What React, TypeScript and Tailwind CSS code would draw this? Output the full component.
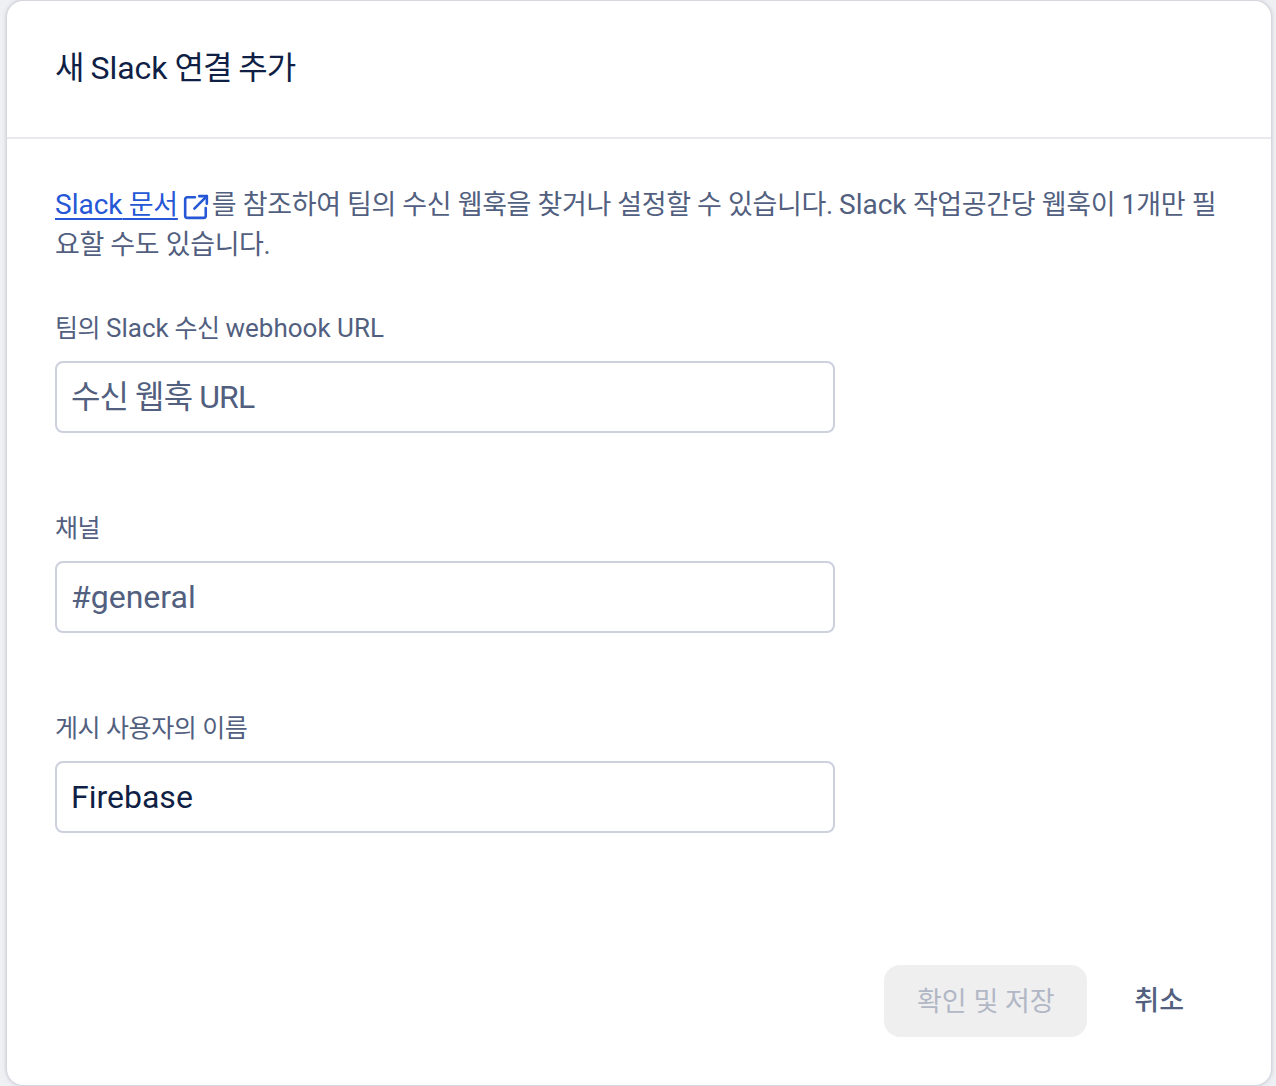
import React from 'react';

// Latin runs are a touch wider than the Korean ones in the reference
const Latin = ({ size, children }: { size: string; children: React.ReactNode }) => (
    <span className={`${size} tracking-normal`}>{children}</span>
);

const Field = ({ label, placeholder, value, inputClass }: { label: React.ReactNode; placeholder?: string; value?: string; inputClass?: string }) => (
    <div className="flex flex-col">
        <label className="text-[25px] leading-[34px] tracking-[-0.4px] text-[#525f7f]">{label}</label>
        <input
            readOnly
            placeholder={placeholder}
            value={value ?? ''}
            className={`mt-[15px] w-[780px] h-[72px] px-[14px] rounded-[8px] border-2 border-[#cdd1de] bg-white text-[32px] text-[#0f1f45] placeholder:text-[#525f7f] outline-none ${inputClass ?? ''}`}
        />
    </div>
);

export default function App() {
    return (
        <div className="h-[1086px] w-[1276px] overflow-hidden bg-[#eff0f4] pt-px pl-[7px] font-['Roboto','Noto_Sans_CJK_KR',sans-serif]">
            <div className="flex h-[1084px] w-[1264px] flex-col rounded-[16px] bg-white shadow-[0_0_4px_rgba(60,64,90,0.35)]">
                <div className="h-[138px] shrink-0 border-b-2 border-[#e8e9ee] pl-[48px] pt-[45px]">
                    <h1 className="text-[32px] leading-[44px] font-normal tracking-[-1px] text-[#0f1f45]">
                        새 <span className="tracking-normal">Slack</span> 연결 추가
                    </h1>
                </div>
                <div className="flex flex-1 flex-col px-[48px] pt-[46px]">
                    <p className="text-[27px] leading-[40px] tracking-[-0.35px] text-[#525f7f]">
                        <a className="text-[#2557d6] underline underline-offset-[4px]">
                            <Latin size="text-[28px]">Slack</Latin> 문서
                        </a>
                        <svg className="ml-[5px] mr-[3px] inline-block h-[26px] w-[26px] align-[-6px] text-[#2557d6]" viewBox="0 0 24 24" fill="none" stroke="currentColor" strokeWidth="2.4" strokeLinecap="round" strokeLinejoin="round">
                            <path d="M11 3H4a2 2 0 0 0-2 2v15a2 2 0 0 0 2 2h15a2 2 0 0 0 2-2v-7" />
                            <path d="M15 2h7v7" />
                            <path d="M22 2 10.5 13.5" />
                        </svg>
                        를 참조하여 팀의 수신 웹훅을 찾거나 설정할 수 있습니다. <Latin size="text-[28px]">Slack</Latin> 작업공간당 웹훅이 1개만 필요할 수도 있습니다.
                    </p>
                    <div className="mt-[46px] flex flex-col gap-[79px]">
                        <Field
                            label={<>팀의 <Latin size="text-[26px]">Slack</Latin> 수신 <Latin size="text-[26px]">webhook URL</Latin></>}
                            placeholder="수신 웹훅 URL"
                            inputClass="placeholder:tracking-[-0.9px]"
                        />
                        <Field label="채널" placeholder="#general" />
                        <Field label="게시 사용자의 이름" value="Firebase" />
                    </div>
                    <div className="mt-[132px] flex items-center justify-end pr-[39px]">
                        <button className="h-[72px] w-[203px] rounded-[16px] bg-[#efeff0] pt-[2px] text-[27px] text-[#b2b7c6]">확인 및 저장</button>
                        <button className="ml-[47px] text-[27px] font-medium text-[#525f7f]">취소</button>
                    </div>
                </div>
            </div>
        </div>
    );
}
